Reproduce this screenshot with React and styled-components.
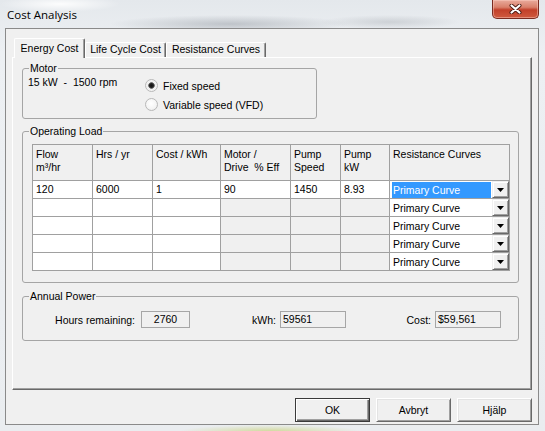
import React from 'react';
import styled, { createGlobalStyle } from 'styled-components';

const GlobalStyle = createGlobalStyle`
  * { box-sizing: border-box; }
  html, body { margin: 0; padding: 0; }
  body {
    width: 545px;
    height: 431px;
    overflow: hidden;
    font-family: "Liberation Sans", Arial, sans-serif;
    font-size: 10.5px;
    color: #000;
  }
`;

const rows = [
    { flow: '120', hrs: '6000', cost: '1', eff: '90', speed: '1450', kw: '8.93' },
    {}, {}, {}, {},
];

function App() {
    return (
        <>
        <GlobalStyle />
        <Frame>
            <TitleBar>
            <Title>Cost Analysis</Title>
            <CloseButton aria-label="Close">
                <svg width="13" height="10" viewBox="0 0 13 10">
                <path d="M2.5 1.5 L10.5 8.5 M10.5 1.5 L2.5 8.5" stroke="#4a1a12" strokeWidth="4" strokeLinecap="round" fill="none" />
                <path d="M2.5 1.5 L10.5 8.5 M10.5 1.5 L2.5 8.5" stroke="#fff" strokeWidth="2.2" strokeLinecap="round" fill="none" />
                </svg>
            </CloseButton>
            </TitleBar>

            <Client>
            <TabStrip>
                <Tab $active $w={71}>Energy Cost</Tab>
                <Tab $w={81}>Life Cycle Cost</Tab>
                <Tab $w={100}>Resistance Curves</Tab>
            </TabStrip>

            <Page>
                <Group $w={295}>
                <Legend>Motor</Legend>
                <MotorBody>
                    <MotorRating>15 kW  -  1500 rpm</MotorRating>
                    <RadioList>
                    <RadioRow><Radio $checked /><span>Fixed speed</span></RadioRow>
                    <RadioRow><Radio /><span>Variable speed (VFD)</span></RadioRow>
                    </RadioList>
                </MotorBody>
                </Group>

                <Group $w={497} $mt={6}>
                <Legend>Operating Load</Legend>
                <LoadBody>
                    <Grid>
                    <HeadCell>{'Flow\nm³/hr'}</HeadCell>
                    <HeadCell>Hrs / yr</HeadCell>
                    <HeadCell>Cost / kWh</HeadCell>
                    <HeadCell>{'Motor /\nDrive  % Eff'}</HeadCell>
                    <HeadCell>{'Pump\nSpeed'}</HeadCell>
                    <HeadCell>{'Pump\nkW'}</HeadCell>
                    <HeadCell>Resistance Curves</HeadCell>
                    {rows.map((r, i) => (
                        <React.Fragment key={i}>
                        <Cell>{r.flow}</Cell>
                        <Cell>{r.hrs}</Cell>
                        <Cell>{r.cost}</Cell>
                        <Cell $shaded={i > 0}>{r.eff}</Cell>
                        <Cell $shaded={i > 0}>{r.speed}</Cell>
                        <Cell $shaded={i > 0}>{r.kw}</Cell>
                        <ComboCell>
                            <ComboValue $selected={i === 0}>Primary Curve</ComboValue>
                            <DropButton>
                            <svg width="7" height="4" viewBox="0 0 7 4">
                                <path d="M0 0 H7 L3.5 4 Z" fill="#000" />
                            </svg>
                            </DropButton>
                        </ComboCell>
                        </React.Fragment>
                    ))}
                    </Grid>
                </LoadBody>
                </Group>

                <Group $w={497} $mt={7}>
                <Legend>Annual Power</Legend>
                <AnnualBody>
                    <FieldLabel $w={112} $mr={6}>Hours remaining:</FieldLabel>
                    <ReadBox $w={49} $align="center">2760</ReadBox>
                    <FieldLabel $w={86} $mr={4}>kWh:</FieldLabel>
                    <ReadBox $w={66}>59561</ReadBox>
                    <FieldLabel $w={85} $mr={4}>Cost:</FieldLabel>
                    <ReadBox $w={66}>$59,561</ReadBox>
                </AnnualBody>
                </Group>
            </Page>

            <ButtonRow>
                <DialogButton $default>OK</DialogButton>
                <DialogButton>Avbryt</DialogButton>
                <DialogButton>Hjälp</DialogButton>
            </ButtonRow>
            </Client>
        </Frame>
        </>
    );
}

export default App;



// styled-components
const Frame = styled.div`
    width: 545px;
    height: 431px;
    padding: 0 6px 0 5px;
    display: flex;
    flex-direction: column;
    background:
        radial-gradient(ellipse 120px 9px at 230px 24px, rgba(150, 156, 164, 0.5), transparent),
        radial-gradient(ellipse 70px 7px at 390px 22px, rgba(165, 170, 176, 0.4), transparent),
        radial-gradient(ellipse 60px 8px at 60px 4px, rgba(255, 255, 255, 0.9), transparent),
        radial-gradient(ellipse 90px 6px at 270px 431px, rgba(205, 214, 140, 0.8), transparent),
        linear-gradient(180deg, #e4e8ec 0%, #edf0f3 12%, #eaedf0 100%);
`;

const TitleBar = styled.div`
    height: 28px;
    flex: none;
    display: flex;
    justify-content: space-between;
    align-items: flex-start;
`;

const Title = styled.div`
    padding: 7px 0 0 2px;
    font-family: "Open Sans", "Noto Sans", sans-serif;
    font-size: 11.5px;
    line-height: 15px;
    color: #000;
`;

const CloseButton = styled.div`
    width: 47px;
    height: 19px;
    display: flex;
    align-items: center;
    justify-content: center;
    border: 1px solid #7a2b20;
    border-top: none;
    border-radius: 0 0 5px 5px;
    background: linear-gradient(180deg, #e9ab9c 0%, #d9806b 40%, #c2402a 55%, #cf5a3f 100%);
    box-shadow: inset 0 0 0 1px rgba(255, 210, 200, 0.45);
`;

const Client = styled.div`
    height: 397px;
    flex: none;
    border: 1px solid #8a8a8a;
    background: #f0f0f0;
    padding: 9px 6px 0 6px;
    display: flex;
    flex-direction: column;
`;

const TabStrip = styled.div`
    display: flex;
    align-items: flex-end;
    padding-left: 2px;
`;

const Tab = styled.div`
    width: ${(p) => p.$w}px;
    height: ${(p) => (p.$active ? 20 : 15)}px;
    margin-bottom: ${(p) => (p.$active ? -1 : 0)}px;
    padding-top: ${(p) => (p.$active ? 3 : 0)}px;
    position: relative;
    z-index: ${(p) => (p.$active ? 1 : 0)};
    background: #f0f0f0;
    border-top: 1px solid #fff;
    border-left: 1px solid #fff;
    border-right: 1px solid #696969;
    border-radius: 2px 2px 0 0;
    box-shadow: inset -1px 0 0 #a0a0a0;
    text-align: center;
    line-height: 13px;
    white-space: nowrap;
`;

const Page = styled.div`
    height: 333px;
    flex: none;
    border-top: 1px solid #fff;
    border-left: 1px solid #fff;
    border-right: 1px solid #696969;
    border-bottom: 1px solid #696969;
    box-shadow: inset -1px -1px 0 #a0a0a0;
    padding: 4px 0 0 9px;
    display: flex;
    flex-direction: column;
    align-items: flex-start;
`;

const Group = styled.fieldset`
    width: ${(p) => p.$w}px;
    min-width: 0;
    margin: ${(p) => p.$mt || 0}px 0 0 0;
    padding: 0;
    border: 1px solid #a5a5a5;
    border-radius: 3px;
`;

const Legend = styled.legend`
    margin-left: 6px;
    padding: 0 1px;
    font-size: 10.5px;
    line-height: 13px;
`;

const MotorBody = styled.div`
    display: flex;
    align-items: flex-start;
    padding: 1px 0 4px 5px;
`;

const MotorRating = styled.div`
    width: 117px;
    line-height: 13px;
    white-space: pre;
`;

const RadioList = styled.div`
    display: flex;
    flex-direction: column;
`;

const RadioRow = styled.label`
    height: 19px;
    display: flex;
    align-items: center;
    gap: 5px;
`;

const Radio = styled.span`
    width: 13px;
    height: 13px;
    border-radius: 50%;
    border: 1px solid #b8b8b8;
    background: ${(p) =>
        p.$checked
            ? 'radial-gradient(circle at 50% 50%, #111 0, #222 2px, #777 3px, #eee 3.6px, #fafafa 100%)'
            : 'radial-gradient(circle at 45% 40%, #ffffff 0, #f4f4f4 60%, #e2e2e2 100%)'};
`;

const LoadBody = styled.div`
    padding: 6px 0 11px 9px;
`;

const Grid = styled.div`
    width: 478px;
    display: grid;
    grid-template-columns: 59px 59px 67px 69px 49px 48px 119px;
    grid-template-rows: 35px repeat(5, 17px);
    gap: 1px;
    background: #a0a0a0;
    border: 1px solid #a0a0a0;
`;

const HeadCell = styled.div`
    background: #f0f0f0;
    padding: 3px 3px 0;
    line-height: 13px;
    white-space: pre;
`;

const Cell = styled.div`
    background: ${(p) => (p.$shaded ? '#f0f0f0' : '#fff')};
    padding: 0 3px;
    line-height: 17px;
    white-space: nowrap;
`;

const ComboCell = styled.div`
    background: #fff;
    display: flex;
`;

const ComboValue = styled.div`
    flex: 1;
    margin: 1px 1px 0 2px;
    padding-left: 1px;
    line-height: 16px;
    white-space: nowrap;
    background: ${(p) => (p.$selected ? '#3399ff' : 'transparent')};
    color: ${(p) => (p.$selected ? '#fff' : '#000')};
`;

const DropButton = styled.div`
    width: 17px;
    height: 17px;
    flex: none;
    display: flex;
    align-items: center;
    justify-content: center;
    background: #f0f0f0;
    border-top: 1px solid #f0f0f0;
    border-left: 1px solid #f0f0f0;
    border-right: 1px solid #696969;
    border-bottom: 1px solid #696969;
    box-shadow: inset 1px 1px 0 #fff, inset -1px -1px 0 #a0a0a0;
`;

const AnnualBody = styled.div`
    display: flex;
    align-items: center;
    padding: 8px 0 12px 0;
`;

const FieldLabel = styled.div`
    width: ${(p) => p.$w}px;
    margin-right: ${(p) => p.$mr}px;
    text-align: right;
    white-space: nowrap;
`;

const ReadBox = styled.div`
    width: ${(p) => p.$w}px;
    height: 17px;
    border: 1px solid #a6a6a6;
    background: #f0f0f0;
    padding: 0 2px;
    line-height: 15px;
    text-align: ${(p) => p.$align || 'left'};
`;

const ButtonRow = styled.div`
    display: flex;
    justify-content: flex-end;
    gap: 6px;
    margin-top: 8px;
`;

const DialogButton = styled.button`
    width: 75px;
    height: 24px;
    padding: 0;
    font-family: "Liberation Sans", Arial, sans-serif;
    font-size: 10.5px;
    color: #000;
    background: #f0f0f0;
    border: 1px solid;
    border-color: ${(p) => (p.$default ? '#3a3a3a' : '#fff #696969 #696969 #fff')};
    box-shadow: ${(p) =>
        p.$default
            ? 'inset 1px 1px 0 #fff, inset -1px -1px 0 #696969, inset -2px -2px 0 #a0a0a0'
            : 'inset 1px 1px 0 #e3e3e3, inset -1px -1px 0 #a0a0a0'};
`;
